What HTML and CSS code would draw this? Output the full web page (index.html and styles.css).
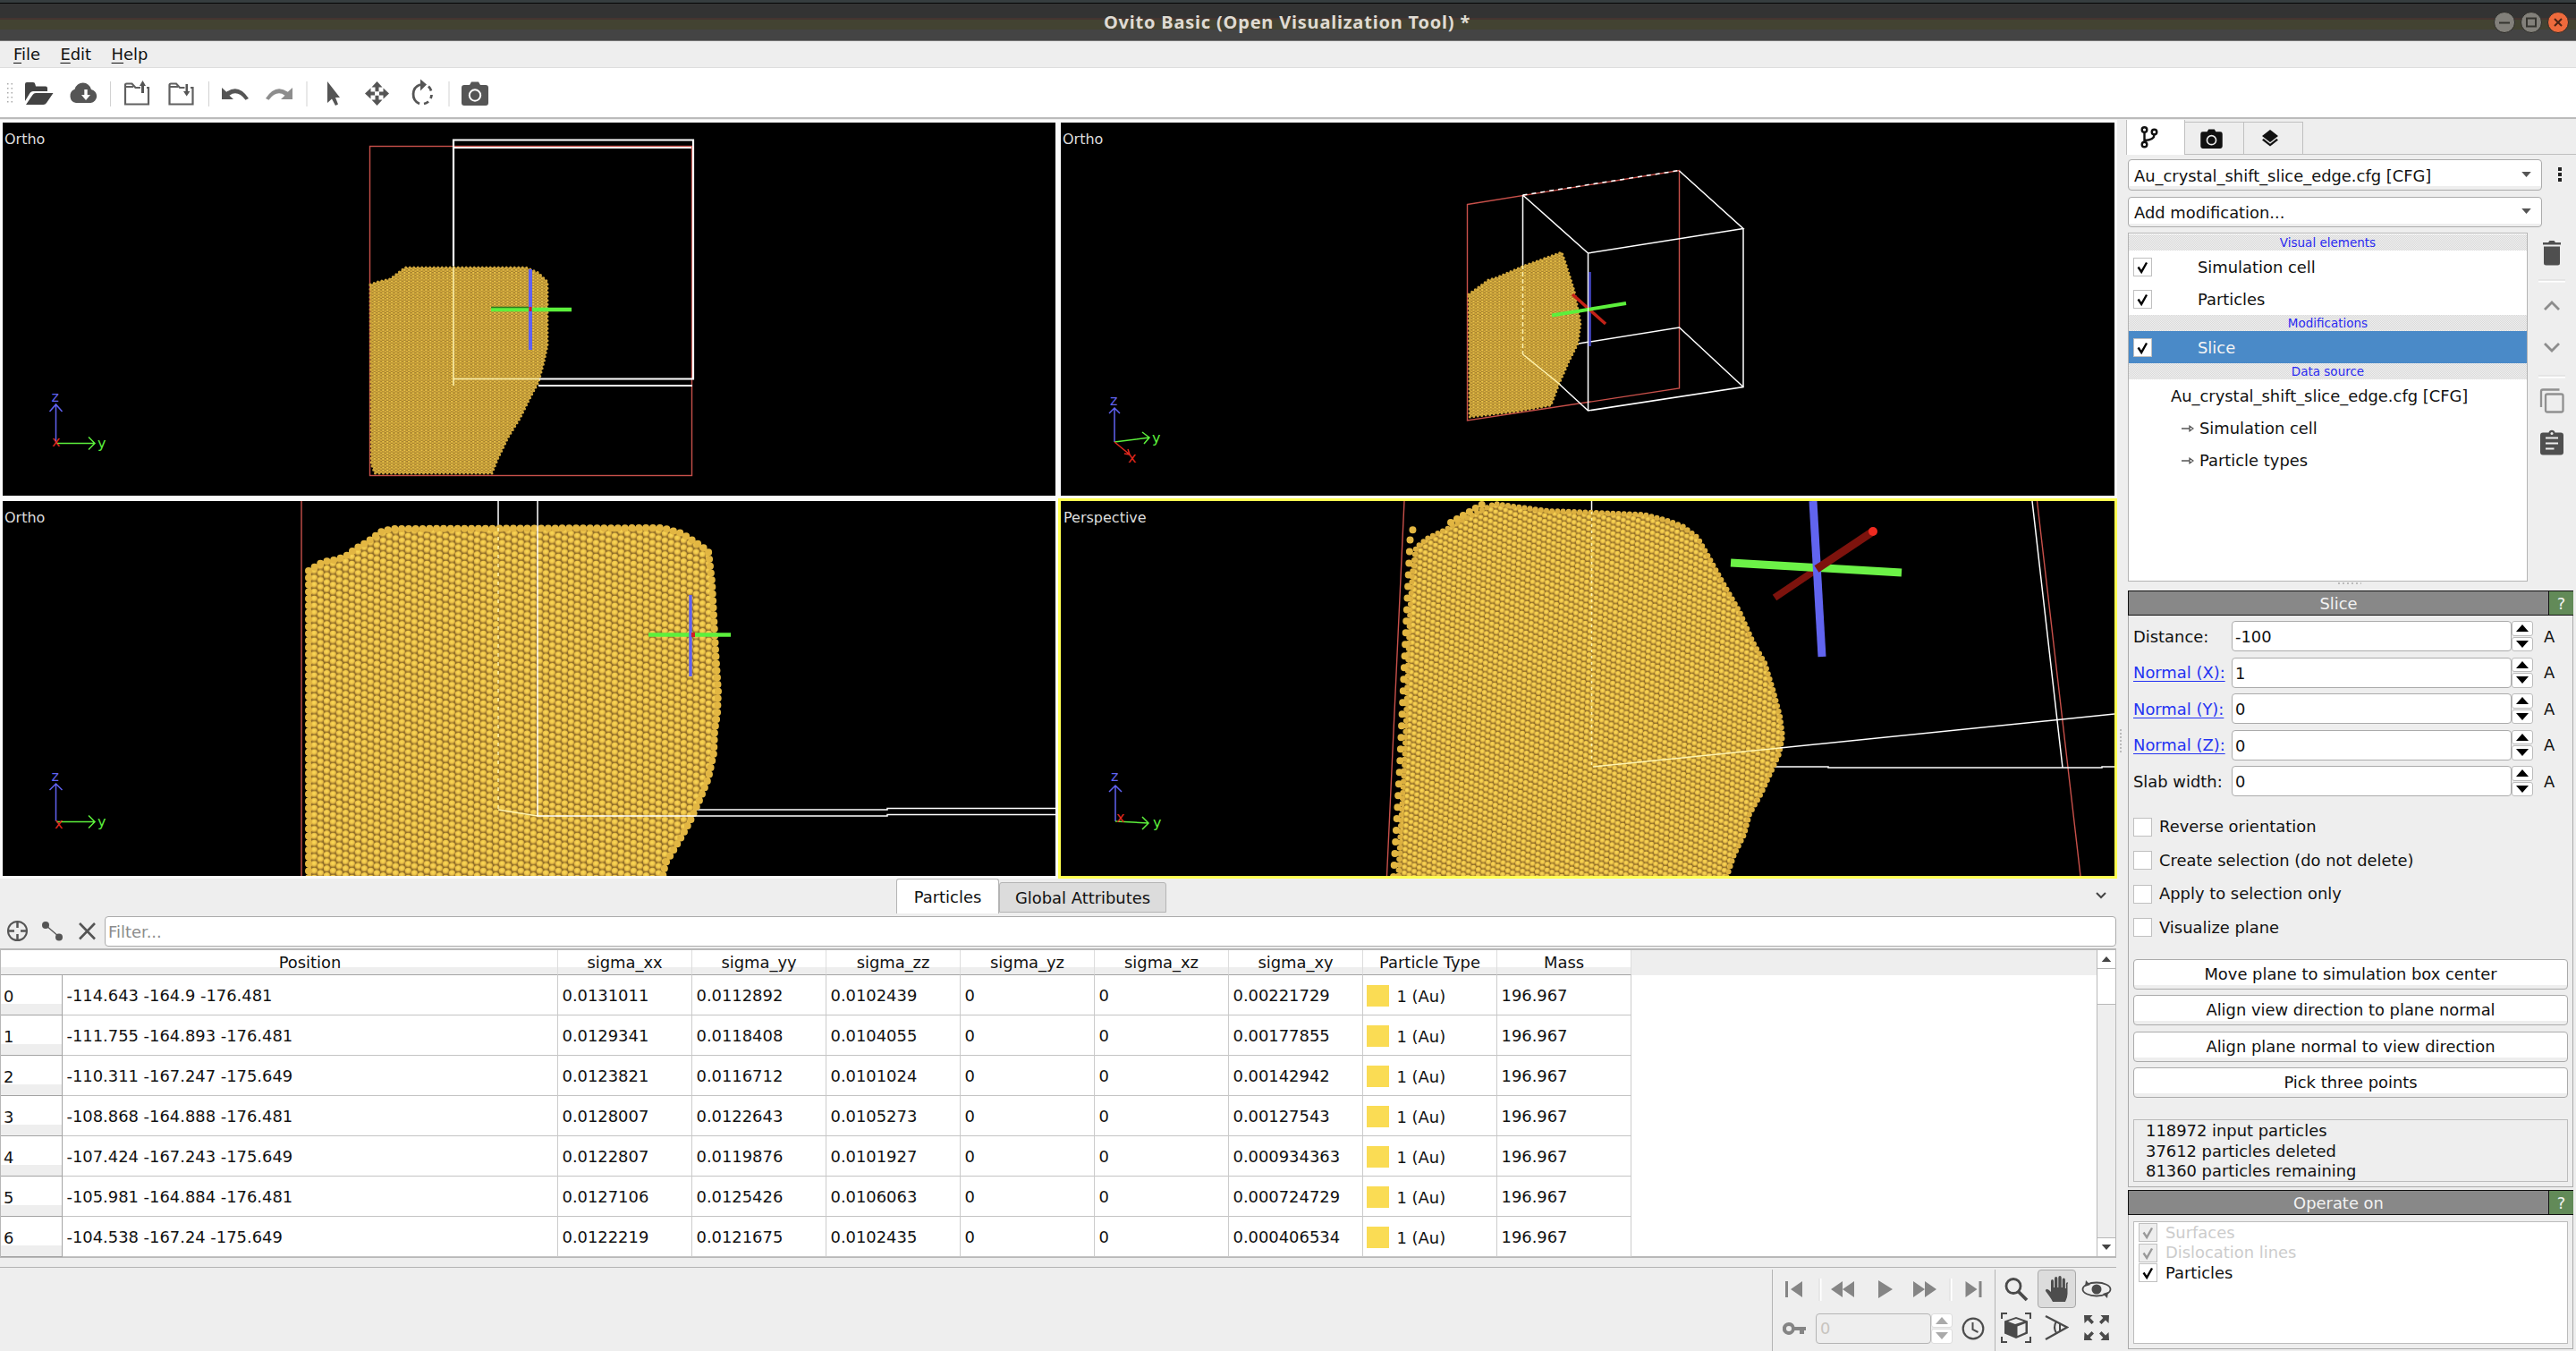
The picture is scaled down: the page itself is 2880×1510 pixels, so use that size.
FILE: index.html
```html
<!DOCTYPE html>
<html lang="en">
<head>
<meta charset="utf-8">
<title>Ovito Basic (Open Visualization Tool) *</title>
<link rel="stylesheet" href="styles.css">
</head>
<body>
<svg class="defs" width="0" height="0" aria-hidden="true">
  <defs>
    <radialGradient id="atom" cx="45%" cy="36%" r="62%">
      <stop offset="0" stop-color="#fbdc58"/><stop offset=".55" stop-color="#ecc148"/><stop offset="1" stop-color="#96712a"/>
    </radialGradient>
    <pattern id="fine" width="4.8" height="3.2" patternUnits="userSpaceOnUse">
      <rect width="4.8" height="3.2" fill="#a07c2c"/>
      <circle cx="1.2" cy=".9" r="1.2" fill="#eec64a"/><circle cx="3.6" cy="2.400" r="1.2" fill="#dfb440"/>
    </pattern>
    <pattern id="coarse" width="21" height="7.8" patternUnits="userSpaceOnUse" patternTransform="translate(341 0)">
      <rect width="21" height="7.8" fill="#8a6925"/>
      <g fill="url(#atom)"><circle cx="10.5" cy="-1.3" r="3.900"/><circle cx="17.5" cy="1.3" r="3.900"/><circle cx="3.5" cy="3.9" r="3.900"/><circle cx="10.5" cy="6.5" r="3.900"/><circle cx="17.5" cy="9.1" r="3.900"/></g>
    </pattern>
    <pattern id="medium" width="16.5" height="6.6" patternUnits="userSpaceOnUse" patternTransform="rotate(2)">
      <rect width="16.5" height="6.6" fill="#8a6925"/>
      <g fill="url(#atom)"><circle cx="8.250" cy="-1.1" r="3.200"/><circle cx="13.75" cy="1.1" r="3.200"/><circle cx="2.75" cy="3.3" r="3.200"/><circle cx="8.25" cy="5.5" r="3.200"/><circle cx="13.75" cy="7.7" r="3.200"/></g>
    </pattern>
    <symbol id="check" viewBox="0 0 21 21"><path d="M5 10.5 9 16.5 15.5 5" fill="none" stroke="currentColor" stroke-width="2.6"/></symbol>
    <symbol id="up" viewBox="0 0 14 8"><path d="M0 8 7 0l7 8z" fill="currentColor"/></symbol>
    <symbol id="down" viewBox="0 0 14 8"><path d="M0 0h14L7 8z" fill="currentColor"/></symbol>
    <symbol id="photo" viewBox="0 0 30 27"><path fill-rule="evenodd" d="M3 4h6l2-3.500h8L21 4h6a3 3 0 0 1 3 3v17a3 3 0 0 1-3 3H3a3 3 0 0 1-3-3V7a3 3 0 0 1 3-3zm12 4.300a7.200 7.200 0 1 0 0 14.400 7.200 7.200 0 0 0 0-14.400zm0 2a5.200 5.200 0 1 1 0 10.400 5.200 5.200 0 0 1 0-10.400z" fill="currentColor"/></symbol>
  </defs>
</svg>

<header class="titlebar">
  <span class="title">Ovito Basic (Open Visualization Tool) *</span>
  <div class="window-buttons">
    <svg width="24" height="24"><circle cx="12" cy="12" r="11.500" fill="#82807a" stroke="#2c2b28"/><path d="M6 12.500h12" stroke="#35342f" stroke-width="2"/></svg>
    <svg width="24" height="24"><circle cx="12" cy="12" r="11.500" fill="#82807a" stroke="#2c2b28"/><path d="M7 7.500h10v9H7z" fill="none" stroke="#35342f" stroke-width="2"/></svg>
    <svg width="24" height="24"><circle cx="12" cy="12" r="11.500" fill="#ee6a3c" stroke="#2c2b28"/><path d="m8 8 8 8m0-8-8 8" stroke="#4a2416" stroke-width="2"/></svg>
  </div>
</header>

<nav class="menubar"><span><u>F</u>ile</span><span><u>E</u>dit</span><span><u>H</u>elp</span></nav>

<div class="toolbar">
  <svg width="560" height="54" viewBox="0 77 560 54">
    <g fill="#aaa"><path d="M8 93h1.500v1.500H8zm0 5h1.500v1.500H8zm0 5h1.500v1.500H8zm0 5h1.500v1.500H8zm0 5h1.500v1.500H8zM12.500 93H14v1.500h-1.500zm0 5H14v1.500h-1.500zm0 5H14v1.500h-1.500zm0 5H14v1.500h-1.500zm0 5H14v1.500h-1.500z"/></g>
    <path d="M123.500 91v28M233.500 91v28M343 91v28M502 91v28" stroke="#d2d2d2"/>
    <g fill="#424242"><path d="M28 113V94q0-2 2-2h7q2 0 2.300 2l.7 2.500h11q2 0 2 2v3.500H37q-2 0-3.400 1.800z"/><path d="M29 117l7.500-11q1.200-2 3.500-2h19.500l-7.500 11q-1.300 2-3.500 2z"/></g>
    <path fill-rule="evenodd" d="M85 115a8 8 0 0 1-1.500-15.300A9.500 9.500 0 0 1 102 100a7.600 7.600 0 0 1-.5 15zM94.300 100v6H91l5 6 5-6h-3.300v-6z" fill="#555"/>
    <g fill="none" stroke="#606060" stroke-width="2.200"><path d="M157 98h-5.500l-4-4.500h-6q-1.500 0-1.500 1.500v21.500h26V98h-2M140 97h9"/><path d="M206.500 98h-5.500l-4-4.500h-6q-1.500 0-1.500 1.500v21.500h26V98H213M190 97h9"/></g>
    <g fill="#555"><path d="M158 104v-8h-2l3.500-6 3.500 6h-2v8zM207.500 94v8h-2.500l3.700 5.500 3.700-5.500H210v-8z"/></g>
    <path d="M248 98v13h13l-4.500-4.300q9-6.500 18 5l3.500-1.600q-11-17-24.800-7.300z" fill="#555"/>
    <path d="M327 98v13h-13l4.500-4.300q-9-6.500-18 5l-3.500-1.600q11-17 24.800-7.300z" fill="#8d8d8d"/>
    <path d="M366 91v24l5-4.500 4 7.500 3-1.500-3-7.500h5z" fill="#555"/>
    <g fill="#555"><path d="M421.500 91l6 6.500h-4v5h-4v-5h-4zM421.500 118l6-6.500h-4v-5h-4v5h-4zM408 104.500l6.500-6v4h4.500v4h-4.500v4zM435 104.500l-6.500-6v4H424v4h4.500v4z"/><path d="M419.500 102.500h4v4h-4z" fill="#fff"/></g>
    <path d="M469 116a11.500 11.500 0 0 1 1-21.500" fill="none" stroke="#555" stroke-width="2.800"/>
    <path d="M474 116a11 11 0 0 0 5-2.500m2.500-3.500a11 11 0 0 0 1-4m-.5-4.500a11 11 0 0 0-3-5" fill="none" stroke="#555" stroke-width="2.800"/><path d="M470 88.500v13l7-7z" fill="#555"/>
    <use href="#photo" x="516" y="91" width="30" height="27" color="#555"/>
  </svg>
</div>

<main class="workspace">
  <section class="left">
    <div class="viewports">
      <svg class="viewport" viewBox="3 137 1177 417">
        <rect x="413.500" y="163.500" width="360" height="368" class="red"/>
        <path class="white thick" d="M602 431h172"/>
        <path class="atoms-fine" d="M414 318 422 315 436 312 453 299H588L602 305 612 315V386L608 405 602 427 592 446 581 468 568 489 556 514 550 529H419L415 518z"/>
        <path class="white thick" d="M507 297V156.500H775V423.500H603M507 165H773"/>
        <path class="pale" d="M507 297V431" stroke-width="2"/><path class="pale" d="M507 423.500h96"/>
        <path d="M549 346h90" stroke="#5cf03c" stroke-width="4.500"/><path d="M549 343.500h42" stroke="#2f7a1c" stroke-width="1.500"/>
        <path d="M593 301v90" stroke="#6062f0" stroke-width="4"/><path d="M591.500 343h3v5h-3z" fill="#d21f1f"/>
        <g class="tripod"><path d="M62.500 495v-43m-7 8 7-8 7 8" stroke="#6062f0"/><path d="M63 495.500h43m-7-7 7 7-7 7" stroke="#5cf03c"/></g>
        <text x="57.500" y="449" fill="#6062f0">z</text><text x="109" y="501" fill="#5cf03c">y</text><text x="58" y="499" fill="#e0281e">x</text>
        <text class="name" x="5" y="161">Ortho</text>
      </svg>
      <svg class="viewport" viewBox="1186 137 1178 417">
        <path class="red" d="M1640.500 228.500 1877.500 190.500V434L1640.500 470z"/>
        <path class="white" d="M1765 384 1877.500 366 1949 432.500"/>
        <path class="atoms-fine" d="M1642 329 1664 313 1674 310 1704 297 1746 282 1750 293 1760 325 1767 361 1764 384 1754 404 1743 429 1734 453 1695 460 1643 466z"/>
        <path class="white" d="M1702.500 218 1775.500 283 1949 255.500 1877.500 191M1775.500 283V459L1949 432.500V255.500M1744 430l31.500 29M1702.500 218v78"/>
        <path class="white" stroke-dasharray="5 5" d="M1702.500 218 1877.500 190.500"/>
        <path class="pale" d="M1702.500 296V396" stroke-dasharray="5 3"/><path class="pale" d="M1702.500 396l42 34"/>
        <path d="M1777.500 304v83" stroke="#4648cc" stroke-width="2.500"/><path d="M1758 329 1795 362" stroke="#c32218" stroke-width="3.500"/><path d="M1735 352.500 1818 339" stroke="#5cf03c" stroke-width="4"/><path d="M1775.500 338v20" stroke="#fff"/>
        <g class="tripod"><path d="M1246 494v-38m-6 6 6-6 6 6" stroke="#6062f0"/><path d="M1246 494l39-5m-8-6 8 6-6 7" stroke="#5cf03c"/><path d="M1246 494l17 14m-2-6 2 6-6-1" stroke="#e0281e"/></g>
        <text x="1241" y="453" fill="#6062f0">z</text><text x="1288" y="495" fill="#5cf03c">y</text><text x="1261" y="517" fill="#e0281e">x</text>
        <text class="name" x="1188" y="161">Ortho</text>
      </svg>
      <svg class="viewport" viewBox="3 560 1177 419">
        <path class="red" d="M337 560v419"/>
        <path class="white" d="M557 560v30M775 905H992V903.500H1180"/>
        <path class="atoms-coarse" d="M345 638 361 628 373 626 386 622 398 613 410 606 428 593 441 591 741 590 762 596 776 605 792 616 796 650 800 727 803 773 802 798 799 817 798 842 792 870 784 890 772 917 761 937 752 952 744 965 740 985H345z"/>
        <path class="pale" d="M557 590V905" stroke-dasharray="4 6"/><path class="pale" d="M557 905l44 7"/>
        <path class="white" d="M601 560v352H992V910.500H1180"/>
        <path d="M725 709.500h92" stroke="#5cf03c" stroke-width="4.500"/><path d="M772 665v91" stroke="#6062f0" stroke-width="3.500"/><path d="M773 707h4v5h-4z" fill="#d21f1f"/>
        <g class="tripod"><path d="M62.500 918v-42m-7 7 7-7 7 7" stroke="#6062f0"/><path d="M63 918.500h43m-7-7 7 7-7 7" stroke="#5cf03c"/></g>
        <text x="57.500" y="873" fill="#6062f0">z</text><text x="109" y="924" fill="#5cf03c">y</text><text x="61" y="926" fill="#e0281e">x</text>
        <text class="name" x="5" y="584">Ortho</text>
      </svg>
      <svg class="viewport active" viewBox="1186 560 1178 419">
        <path class="red" d="M1570 560 1550.500 979M2277.500 560 2326 979"/>
        <path class="white" d="M2272 560 2306 858M1984 857h60l0 1h306v-1h14M1779.500 560v12"/>
        <path class="atoms-medium" d="M1563 985 1566 923 1570 857 1573 773 1576 690 1579 640 1583 612 1597 601 1618 591 1643 577 1671 563 1700 567 1731 571 1787 573 1837 575 1862 581 1881 588 1898 601 1910 622 1926 651 1945 684 1960 718 1973 741 1982 770 1990 800 1993 823 1989 843 1979 865 1969 887 1956 910 1950 933 1939 955 1929 985z"/>
        <path class="beads" d="M1558 980 1565 857 1572 700 1577 593 1588 590"/>
        <path class="beads close" d="M1622 584 1662 561"/>
        <path class="pale" d="M1779.500 572V857" stroke-dasharray="3 4"/><path class="pale" stroke-width="2" d="M1781 857 1990 836"/>
        <path class="white" d="M1990 836 2364 798"/>
        <path d="M1984 668 2030 637" stroke="#7d130d" stroke-width="8"/><path d="M1935 629 2126 640" stroke="#6cf247" stroke-width="9"/><path d="M2027 560 2037 734" stroke="#6164ef" stroke-width="9"/><path d="M2031 636 2094 594" stroke="#7d130d" stroke-width="9"/><circle cx="2094" cy="594" r="5" fill="#ee2a20"/>
        <g class="tripod"><path d="M1247 918v-40m-7 7 7-7 7 7" stroke="#6062f0"/><path d="M1247 918l37 2m-7-7 7 7-7 7" stroke="#5cf03c"/></g>
        <text x="1242" y="873" fill="#6062f0">z</text><text x="1289" y="925" fill="#5cf03c">y</text><text x="1248" y="919" fill="#e0281e">x</text>
        <text class="name" x="1189" y="584">Perspective</text>
      </svg>
    </div>

    <div class="dock-tabs">
      <span class="dock-tab current">Particles</span><span class="dock-tab">Global Attributes</span>
      <svg class="collapse" width="12" height="8"><path d="m1 1 5 5 5-5" fill="none" stroke="#444" stroke-width="2"/></svg>
    </div>
    <div class="filter-row">
      <svg width="110" height="34" viewBox="4 1024 110 34">
        <g fill="none" stroke="#555"><circle cx="19.500" cy="1040.500" r="10.500" stroke-width="2"/><path d="M19.500 1030v7m0 7v7M9 1040.500h7m7 0h7" stroke-width="2.500"/><path d="M51 1034l15 13" stroke-width="1.300"/><path d="m89 1032 17 17.500m0-17.500-17 17.500" stroke-width="2.600"/></g>
        <circle cx="51" cy="1034" r="4" fill="#555"/><circle cx="66" cy="1047.500" r="4" fill="#555"/>
      </svg>
      <div class="filter">Filter...</div>
    </div>
    <div class="table-area">
      <table class="particles">
        <colgroup><col class="c-index"><col class="c-pos"><col span="8" class="c-num"></colgroup>
        <thead><tr><th colspan="2" class="pos-head">Position</th><th>sigma_xx</th><th>sigma_yy</th><th>sigma_zz</th><th>sigma_yz</th><th>sigma_xz</th><th>sigma_xy</th><th>Particle Type</th><th>Mass</th></tr></thead>
        <tbody>
          <tr><th>0</th><td>-114.643 -164.9 -176.481</td><td>0.0131011</td><td>0.0112892</td><td>0.0102439</td><td>0</td><td>0</td><td>0.00221729</td><td class="type">1 (Au)</td><td>196.967</td></tr>
          <tr><th>1</th><td>-111.755 -164.893 -176.481</td><td>0.0129341</td><td>0.0118408</td><td>0.0104055</td><td>0</td><td>0</td><td>0.00177855</td><td class="type">1 (Au)</td><td>196.967</td></tr>
          <tr><th>2</th><td>-110.311 -167.247 -175.649</td><td>0.0123821</td><td>0.0116712</td><td>0.0101024</td><td>0</td><td>0</td><td>0.00142942</td><td class="type">1 (Au)</td><td>196.967</td></tr>
          <tr><th>3</th><td>-108.868 -164.888 -176.481</td><td>0.0128007</td><td>0.0122643</td><td>0.0105273</td><td>0</td><td>0</td><td>0.00127543</td><td class="type">1 (Au)</td><td>196.967</td></tr>
          <tr><th>4</th><td>-107.424 -167.243 -175.649</td><td>0.0122807</td><td>0.0119876</td><td>0.0101927</td><td>0</td><td>0</td><td>0.000934363</td><td class="type">1 (Au)</td><td>196.967</td></tr>
          <tr><th>5</th><td>-105.981 -164.884 -176.481</td><td>0.0127106</td><td>0.0125426</td><td>0.0106063</td><td>0</td><td>0</td><td>0.000724729</td><td class="type">1 (Au)</td><td>196.967</td></tr>
          <tr><th>6</th><td>-104.538 -167.24 -175.649</td><td>0.0122219</td><td>0.0121675</td><td>0.0102435</td><td>0</td><td>0</td><td>0.000406534</td><td class="type">1 (Au)</td><td>196.967</td></tr>
        </tbody>
      </table>
      <div class="table-rest"></div>
      <div class="scrollbar">
        <div class="scroll-button"><svg width="12" height="6"><use href="#up"/></svg></div>
        <div class="scroll-thumb"></div><div class="scroll-track"></div>
        <div class="scroll-button"><svg width="12" height="6"><use href="#down"/></svg></div>
      </div>
    </div>

    <footer class="status">
      <div class="status-space"></div>
      <div class="playback">
        <svg class="transport" width="240" height="44" viewBox="1988 1419 240 44">
          <g fill="#858585"><path d="M1996 1432h3v18h-3zM2015 1432v18l-13-9zM2060 1432v18l-13-9zM2073 1432v18l-13-9zM2100 1431v20l16-10zM2139 1432v18l13-9zM2152 1432v18l13-9zM2197.500 1432v18l13-9zM2212.500 1432h3v18h-3z"/></g>
          <path d="M2035.500 1429v25M2181.500 1429v25" stroke="#fff" stroke-width="2"/><path d="M2034 1429v25M2180 1429v25" stroke="#ddd"/>
        </svg>
        <div class="frame-row">
          <svg width="26" height="16" viewBox="0 0 26 16"><path fill-rule="evenodd" d="M7 1a7 7 0 0 1 6.500 5H26v4h-2v4h-5v-4h-5.500A7 7 0 1 1 7 1zm0 4a3 3 0 1 0 0 6 3 3 0 0 0 0-6z" fill="#858585"/></svg>
          <div class="frame-field">0</div>
          <div class="spin off"><span><svg width="14" height="8"><use href="#up"/></svg></span><span><svg width="14" height="8"><use href="#down"/></svg></span></div>
          <svg class="clock" width="26" height="26"><circle cx="13" cy="13" r="11.300" fill="none" stroke="#4d4d4d" stroke-width="2.200"/><path d="M12.500 6v8l6 3" fill="none" stroke="#4d4d4d" stroke-width="2"/></svg>
        </div>
      </div>
      <div class="nav-tools">
        <div><svg width="28" height="28"><circle cx="11" cy="10.500" r="8" fill="none" stroke="#4a4a4a" stroke-width="2.800"/><path d="m16.500 16.500 9.500 9.500" stroke="#4a4a4a" stroke-width="3.800"/></svg></div>
        <div class="pressed"><svg width="28" height="30"><path d="M9 29q-1.500-3-4-6.500L1 17q-.5-2 1.500-2.300Q4.500 15 7 18V6q0-2 1.500-2T10 6v7h1V3q0-2 1.700-2t1.600 2v10h1V2q0-2 1.700-2t1.700 2v11h1V4.500q0-2 1.600-2t1.600 2V14h1V9q0-1.800 1.500-1.800T25.500 9v11q0 4-2.500 9z" fill="#4d4d4d"/></svg></div>
        <div><svg width="34" height="20"><ellipse cx="17" cy="10" rx="15.500" ry="7.500" fill="none" stroke="#4a4a4a" stroke-width="1.800"/><circle cx="17" cy="10" r="5.500" fill="#4a4a4a"/><path d="M5 0l5 5-6 2zM29 20l-5-5 6-2z" fill="#4a4a4a"/></svg></div>
        <div><svg width="34" height="34"><path d="M1 7V1h6M27 1h6v6M33 27v6h-6M7 33H1v-6" fill="none" stroke="#4a4a4a" stroke-width="2"/><path d="M4 9.500 17 5l13 4.500v14L17 29 4 23.500z" fill="#4a4a4a"/><path d="M17 7 8 10l8 3 9.500-3z" fill="#eee"/><path d="M18.500 15.500 27.500 12v10l-9 4z" fill="#eee"/></svg></div>
        <div><svg width="28" height="30"><path d="M2 2 26 14.500 2 28" fill="none" stroke="#4a4a4a" stroke-width="2.400"/><path d="M14 8q-4 6.500 0 13M18 10v9" fill="none" stroke="#4a4a4a" stroke-width="2"/></svg></div>
        <div><svg width="28" height="28"><g fill="#4a4a4a"><path d="M0 0h9.500L6.700 3 11 7.500 8.500 10 4 5.500.5 9z"/><path d="M28 0h-9.500l2.800 3L17 7.500l2.500 2.500L24 5.500l3.500 3.500z"/><path d="M0 28h9.500L6.700 25 11 20.500 8.500 18 4 22.500.5 19z"/><path d="M28 28h-9.500l2.800-3L17 20.500l2.500-2.500 4.500 4.500 3.500-3.500z"/></g></svg></div>
      </div>
    </footer>
  </section>

  <div class="splitter"><i></i></div>

  <aside class="panel">
    <div class="panel-tabs">
      <div class="panel-tab current"><svg width="20" height="25"><g fill="none" stroke="#111" stroke-width="2.400"><circle cx="4.500" cy="4" r="2.800"/><circle cx="15.500" cy="6.500" r="2.800"/><circle cx="4.500" cy="20.500" r="2.800"/><path d="M4.500 7v11M15.500 9.500q0 6-11 6.500"/></g></svg></div>
      <div class="panel-tab"><svg width="25" height="22"><use href="#photo"/></svg></div>
      <div class="panel-tab"><svg width="18" height="20"><path d="M9 0l9 7-9 7-9-7zM0 11.500l9 7 9-7-1.800-1.400L9 15.700l-7.200-5.600z" fill="#111"/></svg></div>
      <div class="panel-tab-rest"></div>
    </div>
    <div class="combos">
      <div class="combo">Au_crystal_shift_slice_edge.cfg [CFG]<svg width="11" height="6"><use href="#down"/></svg></div>
      <svg class="kebab" width="4" height="16"><path d="M0 0h4v4H0zm0 6h4v4H0zm0 6h4v4H0z" fill="#222"/></svg>
      <div class="combo second">Add modification...<svg width="11" height="6"><use href="#down"/></svg></div>
    </div>
    <div class="pipeline">
      <div class="pipeline-list">
        <div class="group">Visual elements</div>
        <div class="item"><span class="box"><svg><use href="#check"/></svg></span>Simulation cell</div>
        <div class="item"><span class="box"><svg><use href="#check"/></svg></span>Particles</div>
        <div class="group">Modifications</div>
        <div class="item selected"><span class="box"><svg><use href="#check"/></svg></span>Slice</div>
        <div class="group">Data source</div>
        <div class="item source">Au_crystal_shift_slice_edge.cfg [CFG]</div>
        <div class="item sub"><svg width="14" height="8"><path d="M0 4h9M9 1.200V6.800L13 4z" fill="none" stroke="#555" stroke-width="1.300"/></svg>Simulation cell</div>
        <div class="item sub"><svg width="14" height="8"><path d="M0 4h9M9 1.200V6.800L13 4z" fill="none" stroke="#555" stroke-width="1.300"/></svg>Particle types</div>
      </div>
      <svg class="side-tools" width="54" height="260" viewBox="2826 260 54 260">
        <path d="M2843 271h6l1.500-2h5l1.500 2h6v2.500h-20zM2844 275.500h18v18.500q0 2.500-2.500 2.500h-13q-2.500 0-2.500-2.500z" fill="#4f4f4f"/>
        <path d="M2838 314.500h30M2838 421.500h30" stroke="#fff" stroke-width="2"/><path d="M2838 313h30M2838 420h30" stroke="#d8d8d8"/>
        <path d="m2845 346 8-8 8 8M2845 384l8 8 8-8" fill="none" stroke="#8d8d8d" stroke-width="2.800"/>
        <path d="M2841 455v-17.500q0-2 2-2h18.500" fill="none" stroke="#909090" stroke-width="2.300"/><rect x="2846" y="440.500" width="19.500" height="20" rx="2" fill="none" stroke="#909090" stroke-width="2.300"/>
        <path d="M2843 483.500h6.500a3.600 3.600 0 0 1 7 0h6.500q3 0 3 3v19q0 3-3 3h-20q-3 0-3-3v-19q0-3 3-3z" fill="#4f4f4f"/><path d="M2846 489.500h14M2846 495.500h14M2846 501.500h9.500" stroke="#eee" stroke-width="2.200"/><circle cx="2853" cy="484.500" r="1.500" fill="#eee"/>
      </svg>
    </div>
    <div class="grip"></div>

    <div class="rollout-title"><span>Slice</span><b>?</b></div>
    <div class="rollout">
      <div class="param"><label>Distance:</label><div class="field">-100</div><div class="spin"><span><svg width="14" height="8"><use href="#up"/></svg></span><span><svg width="14" height="8"><use href="#down"/></svg></span></div><em>A</em></div>
      <div class="param"><label><a>Normal (X):</a></label><div class="field">1</div><div class="spin"><span><svg width="14" height="8"><use href="#up"/></svg></span><span><svg width="14" height="8"><use href="#down"/></svg></span></div><em>A</em></div>
      <div class="param"><label><a>Normal (Y):</a></label><div class="field">0</div><div class="spin"><span><svg width="14" height="8"><use href="#up"/></svg></span><span><svg width="14" height="8"><use href="#down"/></svg></span></div><em>A</em></div>
      <div class="param"><label><a>Normal (Z):</a></label><div class="field">0</div><div class="spin"><span><svg width="14" height="8"><use href="#up"/></svg></span><span><svg width="14" height="8"><use href="#down"/></svg></span></div><em>A</em></div>
      <div class="param"><label>Slab width:</label><div class="field">0</div><div class="spin"><span><svg width="14" height="8"><use href="#up"/></svg></span><span><svg width="14" height="8"><use href="#down"/></svg></span></div><em>A</em></div>
      <div class="options">
        <div class="option"><span class="box"></span>Reverse orientation</div>
        <div class="option"><span class="box"></span>Create selection (do not delete)</div>
        <div class="option"><span class="box"></span>Apply to selection only</div>
        <div class="option"><span class="box"></span>Visualize plane</div>
      </div>
      <div class="buttons">
        <div class="button">Move plane to simulation box center</div>
        <div class="button">Align view direction to plane normal</div>
        <div class="button">Align plane normal to view direction</div>
        <div class="button">Pick three points</div>
      </div>
      <div class="info">118972 input particles<br>37612 particles deleted<br>81360 particles remaining</div>
    </div>
    <div class="rollout-title operate"><span>Operate on</span><b>?</b></div>
    <div class="rollout last">
      <div class="targets">
        <div class="target off"><span class="box"><svg><use href="#check"/></svg></span>Surfaces</div>
        <div class="target off"><span class="box"><svg><use href="#check"/></svg></span>Dislocation lines</div>
        <div class="target"><span class="box"><svg><use href="#check"/></svg></span>Particles</div>
      </div>
    </div>
  </aside>
</main>
</body>
</html>
```

FILE: styles.css
```css
* { box-sizing: border-box; }
body {
  margin: 0; width: 2880px; height: 1510px; overflow: hidden;
  display: flex; flex-direction: column;
  background: #eee; color: #111;
  font: 17.9px/22px "DejaVu Sans", sans-serif; white-space: nowrap;
}
svg { display: block; flex: none; }
.defs { position: absolute; }

/* Title, menu and tool bars */
.titlebar {
  flex: none; height: 46px; padding: 3px 8px 0 0;
  display: grid; grid-template-columns: 1fr auto 1fr; align-items: center;
  background: linear-gradient(#363d3f 0 3px, #050505 3px 4px, #333 4px 20px, #453430 20px 22px, #434332 22px 33px, #444 33px 45px, #777 45px);
}
.title {
  grid-column: 2; padding-left: 6px; color: #dfdbd2;
  font: bold 20px/24px "Noto Sans", "Open Sans", sans-serif; letter-spacing: .8px;
}
.window-buttons { justify-self: end; display: flex; gap: 6px; }
.menubar { flex: none; height: 30px; padding-left: 15px; display: flex; gap: 22.500px; align-items: center; border-bottom: 1px solid #ddd; }
.menubar u { text-underline-offset: 3px; text-decoration-thickness: 1px; }
.toolbar { flex: none; height: 58px; padding-top: 1px; background: linear-gradient(#fff 0 55px, #bbb 55px 57px, #eee 57px); }

.workspace { flex: 1; min-height: 0; display: grid; grid-template-columns: 2367px 10px 1fr; }
.left { display: flex; flex-direction: column; min-width: 0; }

/* Viewports */
.viewports {
  flex: none; height: 848px; padding: 3px; background: #fbfbfb;
  display: grid; grid-template: 417px 419px / 1177px 1178px; gap: 6px;
}
.viewport { width: 100%; height: 100%; background: #000; }
.viewport.active { box-shadow: 0 0 0 3px #ffff50; }
.viewport path, .viewport rect { fill: none; }
.viewport .red { stroke: #c8504a; stroke-width: 1.4; }
.viewport .white { stroke: #fff; stroke-width: 1.5; }
.viewport .thick { stroke-width: 2.200; }
.viewport .pale { stroke: #fff4b0; stroke-width: 1.500; }
.viewport .atoms-fine { fill: url(#fine); stroke: #d0a63c; stroke-width: 3; stroke-linecap: round; stroke-dasharray: 0 4.500; }
.viewport .atoms-coarse { fill: url(#coarse); stroke: #e2b642; stroke-width: 8; stroke-linecap: round; stroke-dasharray: 0 7.8; }
.viewport .atoms-medium { fill: url(#medium); stroke: #dcb040; stroke-width: 6; stroke-linecap: round; stroke-dasharray: 0 6.2; }
.viewport .beads { stroke: #e2b642; stroke-width: 8; stroke-linecap: round; stroke-dasharray: 0 13; }
.viewport .beads.close { stroke-dasharray: 0 8; }
.viewport path[fill] { fill: #d21f1f; }
.tripod path { stroke-width: 1.5; }
.viewport text { font-size: 16px; }
.viewport .name { fill: #ddd; }

/* Data inspector */
.dock-tabs { flex: none; height: 39px; padding-left: 1002px; display: flex; align-items: flex-start; }
.dock-tab {
  height: 34px; margin-top: 4px; width: 187px; line-height: 33px; text-align: center;
  background: #dcdcdc; border: 1px solid #b4b4b4; border-radius: 3px 3px 0 0;
}
.dock-tab.current { width: 115px; height: 39px; margin-top: 0; line-height: 40px; background: #fff; border-bottom: 0; }
.collapse { margin: 15px 12px 0 auto; }
.filter-row { flex: none; height: 39px; padding: 3px 1px 2px 4px; display: flex; gap: 3px; }
.filter { flex: 1; border: 1.500px solid #ababab; border-radius: 4px; background: #fff; color: #8c8c8c; padding-left: 3px; line-height: 33px; }
.table-area { flex: none; height: 346px; margin-right: 1px; display: flex; background: #fff; border-top: 2px solid #b8b8b8; border-bottom: 2px solid #b8b8b8; border-left: 1px solid #b8b8b8; }
.particles { border-collapse: separate; border-spacing: 0; table-layout: fixed; width: 1823px; }
.c-index { width: 69px; } .c-pos { width: 554px; } .c-num { width: 150px; }
.particles th { font-weight: 400; padding: 0; }
.particles thead th { height: 28px; padding-top: 1px; border-right: 1px solid #ddd; border-bottom: 1px solid #a4a4a4; background: linear-gradient(#fff 0 19px, #eee 19px); }
.particles thead .pos-head { padding-left: 69px; text-align: center; }
.particles tbody tr { height: 45px; }
.particles tbody th { text-align: left; padding: 3px 0 0 3px; border-right: 1px solid #a4a4a4; border-bottom: 1.500px solid #a4a4a4; background: linear-gradient(#fff 0 32px, #eee 32px); }
.particles td { padding: 1px 0 0 4.500px; border-right: 1px solid #ccc; border-bottom: 1px solid #c4c4c4; }
.particles .type::before { content: ""; display: inline-block; width: 25px; height: 24px; margin-right: 9px; vertical-align: -5px; background: #fadc54; }
.particles .type { padding-left: 3.500px; }
.table-rest { flex: 1; background: linear-gradient(#eee 0 28px, #fff 28px); }
.scrollbar { width: 22px; display: flex; flex-direction: column; border: solid #b8b8b8; border-width: 0 1px; color: #444; }
.scroll-button { height: 20px; display: grid; place-items: center; background: #fff; }
.scroll-thumb { height: 41px; background: #fff; border: solid #b8b8b8; border-width: 1px 0; }
.scroll-track { flex: 1; background: #eee; border-bottom: 1px solid #b8b8b8; }

/* Animation and navigation controls */
.status { flex: none; height: 94px; margin: 10px 1px 0 0; display: flex; border-top: 1.500px solid #b4b4b4; }
.status-space { width: 1981px; }
.playback { width: 250px; margin-top: 2px; padding-left: 6px; border: solid #b4b4b4; border-width: 0 1px; }
.frame-row { display: flex; align-items: center; padding: 0 0 0 5px; height: 43px; }
.frame-field { width: 129px; height: 34px; margin-left: 11px; border: 1.500px solid #b4b4b4; border-radius: 4px; padding-left: 4px; line-height: 32px; color: #c8c4be; }
.clock { margin-left: 10px; }
.nav-tools { flex: 1; display: grid; grid-template-columns: 45px 45px 45px; grid-template-rows: 43px 44px; padding-top: 2px; }
.nav-tools div { display: grid; place-items: center; }
.nav-tools .pressed { margin: 0 0 0 2px; border: 1.500px solid #a8a8a8; border-radius: 4px; background: #dcdcdc; }

.splitter { display: grid; place-items: center; }
.splitter i { width: 4px; height: 26px; margin-top: 12px; background: radial-gradient(circle at 1px 1px, #bbb 0 1px, transparent 1px) 0 0 / 4px 4px; }

/* Command panel */
.panel { display: flex; flex-direction: column; padding-right: 3px; }
.panel-tabs { flex: none; display: flex; height: 39px; margin-right: -3px; }
.panel-tab { width: 66px; height: 37px; margin-top: 2px; display: grid; place-items: center; padding-right: 7px; border: 1px solid #c0c0c0; border-left: 0; }
.panel-tab.current { height: 39px; margin-top: 0; padding: 0 14px 1px 0; background: #fff; border: solid #c0c0c0; border-width: 0 1px; }
.panel-tab-rest { flex: 1; border-bottom: 1px solid #c0c0c0; }
.combos { flex: none; display: grid; grid-template-columns: 463px 1fr; grid-template-rows: 35px 34px; row-gap: 7px; padding: 5px 0 0 2px; }
.combo { border: 1.500px solid #ababab; border-radius: 4px; background: linear-gradient(#fff 0 29px, #eee 29px); display: flex; justify-content: space-between; align-items: center; padding: 2px 11px 0 6px; color: #111; }
.combo svg { color: #555; margin-bottom: 4px; }
.kebab { margin: 9px 0 0 18px; }
.pipeline { flex: none; height: 390px; margin-top: 6px; padding-left: 2px; display: flex; margin-right: -3px; }
.pipeline-list { width: 447px; padding-top: 1px; background: #fff; border: 1.500px solid #b4b4b4; }
.group { height: 18px; line-height: 18px; font-size: 13.500px; text-align: center; color: #2a2af0; background: conic-gradient(#d9d9d9 25%, #f0f0f0 0 50%, #d9d9d9 0 75%, #f0f0f0 0) 0 0 / 2px 2px; }
.item { height: 36px; display: flex; align-items: center; padding: 2px 0 0 5px; }
.item .box { margin: -2px 51px 0 0; }
.item.selected { background: #4a8ac8; color: #f4f4f4; }
.item.source { padding-left: 47px; }
.item.sub { padding-left: 59px; gap: 6px; }
.box { flex: none; width: 21px; height: 21px; background: #fff; border: 1.500px solid #c0c0c0; color: #000; }
.box svg { width: 19px; height: 19px; }
.grip { flex: none; height: 10px; width: 26px; align-self: center; background: radial-gradient(circle at 1px 1px, #bbb 0 1px, transparent 1px) 0 1px / 5px 4px repeat-x; }

.rollout-title { flex: none; height: 28px; margin-left: 2px; display: flex; border: solid #111; border-width: 1.500px 0 1.500px 1.500px; background: #888; color: #f2f2f2; text-align: center; line-height: 27px; }
.rollout-title span { flex: 1; }
.rollout-title b { width: 28px; font-weight: 400; background: #628a58; border-left: 1.500px solid #111; }
.rollout { flex: none; height: 639px; margin-left: 2px; border: solid #aaa; border-width: 0 1.500px 1.500px; padding: 6px 5px 0; }
.param { display: flex; align-items: center; height: 34px; margin-bottom: 6.550px; }
.param label { width: 110px; padding-top: 1px; }
.param a { color: #2433f2; text-decoration: underline; text-underline-offset: 3px; text-decoration-thickness: 1px; }
.field { width: 313px; height: 34px; line-height: 33px; padding-left: 3px; background: #fff; border: 1.500px solid #ababab; border-radius: 4px; }
.spin { width: 24px; height: 34px; display: flex; flex-direction: column; gap: 1px; color: #000; }
.spin span { flex: 1; display: grid; place-items: center; background: #fff; border: 1px solid #bbb; border-radius: 3px; }
.spin.off { color: #aaa; }
.spin.off span { border-color: #ddd; }
.param em { font-style: normal; margin-left: 12px; padding-top: 1px; }
.options { padding-top: 16.500px; }
.option { display: flex; align-items: center; gap: 8px; height: 21px; margin-bottom: 16.500px; padding-top: 1px; }
.buttons { padding-top: 8.500px; }
.button { height: 34px; margin-bottom: 6.400px; line-height: 32px; text-align: center; border: 1.500px solid #ababab; border-radius: 4px; background: linear-gradient(#fff 0 28px, #eee 28px); }
.info { height: 70px; margin-top: 24px; padding: 1px 0 0 13px; border: 1.500px solid #bcbcbc; line-height: 22.600px; }
.rollout-title.operate { margin-top: 3px; }
.rollout.last { height: 150px; padding-top: 7px; }
.targets { height: 137px; padding: 0 5px; background: #fff; border: 1.500px solid #bcbcbc; }
.target { display: flex; align-items: center; gap: 9px; height: 22.600px; padding-top: 1px; }
.target.off { color: #ccc; }
.target.off .box { background: #eee; color: #999; }
```
